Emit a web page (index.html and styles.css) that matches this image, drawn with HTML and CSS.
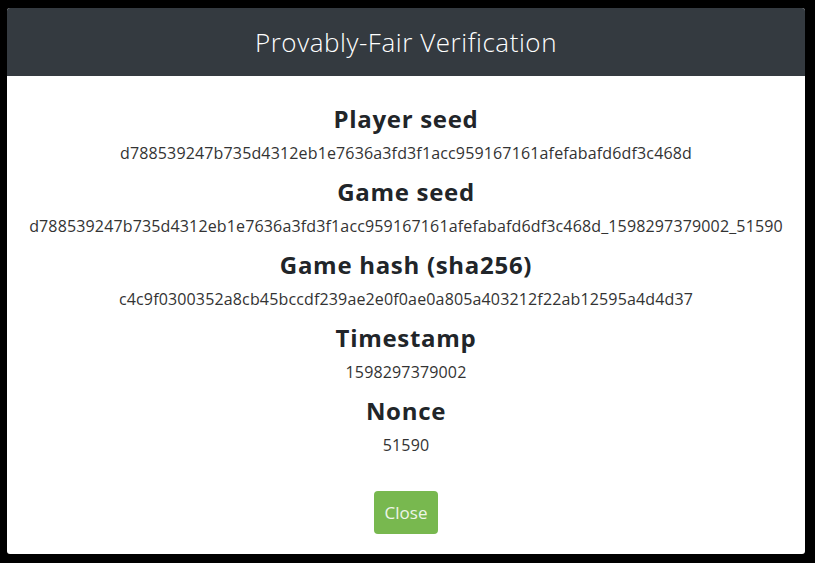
FILE: index.html
```html
<!DOCTYPE html>
<html>
<head>
<meta charset="utf-8">
<link rel="stylesheet" href="styles.css">
</head>
<body>
<div class="modal">
  <div class="modal-header">
    <h2 class="modal-title">Provably-Fair Verification</h2>
  </div>
  <div class="modal-body">
    <h4 class="label">Player seed</h4>
    <p class="value">d788539247b735d4312eb1e7636a3fd3f1acc959167161afefabafd6df3c468d</p>
    <h4 class="label">Game seed</h4>
    <p class="value">d788539247b735d4312eb1e7636a3fd3f1acc959167161afefabafd6df3c468d_1598297379002_51590</p>
    <h4 class="label">Game hash (sha256)</h4>
    <p class="value">c4c9f0300352a8cb45bccdf239ae2e0f0ae0a805a403212f22ab12595a4d4d37</p>
    <h4 class="label">Timestamp</h4>
    <p class="value">1598297379002</p>
    <h4 class="label">Nonce</h4>
    <p class="value">51590</p>
    <button class="btn-close">Close</button>
  </div>
</div>
</body>
</html>
```
FILE: styles.css
```css
html, body {
  margin: 0;
  padding: 0;
  background: #000;
  height: 100%;
}
body {
  padding: 8px 10px 0 7px;
  box-sizing: border-box;
  font-family: "Open Sans", "Liberation Sans", sans-serif;
}
.modal {
  width: 798px;
  background: #fff;
  border-radius: 3px;
  overflow: hidden;
}
.modal-header {
  background: #343a40;
  height: 68px;
  display: flex;
  align-items: center;
  justify-content: center;
}
.modal-title {
  margin: 0;
  color: #fff;
  font-weight: 300;
  font-size: 26px;
  letter-spacing: 0.55px;
}
.modal-body {
  display: flex;
  flex-direction: column;
  align-items: center;
  padding: 28px 16px 20px;
}
.label {
  margin: 0 0 9px;
  font-size: 24px;
  line-height: 29px;
  font-weight: 700;
  color: #212529;
  letter-spacing: 0.7px;
}
.value {
  margin: 0 0 12px;
  font-size: 16px;
  line-height: 23px;
  color: #333;
  letter-spacing: 0.15px;
}
.btn-close {
  margin-top: 22px;
  width: 64px;
  height: 43px;
  border: none;
  border-radius: 4px;
  background: #78b84f;
  color: #eef5e8;
  font-family: inherit;
  font-size: 17px;
  padding: 0;
}
```
